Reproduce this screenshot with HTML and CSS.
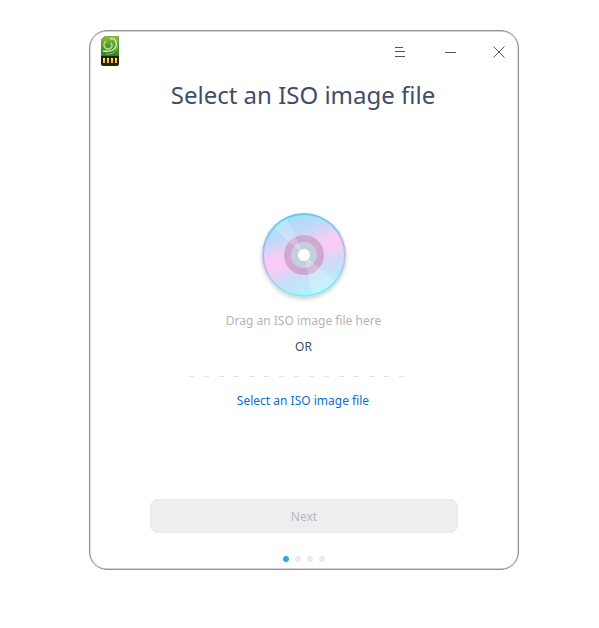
FILE: index.html
```html
<!DOCTYPE html>
<html lang="en">
<head>
<meta charset="utf-8">
<title>Boot Maker</title>
<link rel="stylesheet" href="styles.css">
</head>
<body>
<main class="window">
  <header class="titlebar">
    <svg class="app-icon" width="20" height="32" viewBox="0 0 20 32">
      <defs>
        <linearGradient id="card" x1="0" y1="0" x2="0" y2="1">
          <stop offset="0" stop-color="#8fbf38"/><stop offset=".5" stop-color="#4f9a2c"/><stop offset="1" stop-color="#2f8420"/>
        </linearGradient>
      </defs>
      <path d="M5 1H17.500Q19 1 19 2.500V29Q19 31 17 31H3Q1 31 1 29V5Z" fill="#252410"/>
      <path d="M5 1H17.500Q19 1 19 2.500V21H1V5Z" fill="url(#card)"/>
      <path d="M6 6C2.500 9 4 14 8 14C12 14 13 10 11 8" fill="none" stroke="#b9dc91" stroke-width="1.500"/>
      <path d="M10 4C14 2.500 17.500 6 16 11C14.500 15.500 9 17 3 16" fill="none" stroke="#d3eab8" stroke-width="1.500"/>
      <path d="M17.500 11C17 17 12 19.500 6 19" fill="none" stroke="#8fc467" stroke-width="1"/>
      <path d="M3 23h2v5H3zM7 23h2v5H7zM11 23h2v5h-2zM15 23h2v5h-2z" fill="#f0b92e"/>
      <path d="M3 23h2v2H3zM7 23h2v2H7zM11 23h2v2h-2zM15 23h2v2h-2z" fill="#ffe17b"/>
    </svg>
    <div class="controls">
      <svg width="12" height="12" viewBox="0 0 12 12"><path d="M1 1.500h8M1 5.500h10M1 10.500h10"/></svg>
      <svg width="12" height="12" viewBox="0 0 12 12"><path d="M1 6.500h11"/></svg>
      <svg width="12" height="12" viewBox="0 0 12 12"><path d="M.5 .5l11 11M11.500 .5l-11 11"/></svg>
    </div>
  </header>
  <h1 class="title">Select an ISO image file</h1>
  <section class="drop-area">
    <div class="disc"><div class="disc-face"><div class="disc-ring"><div class="disc-hub"><div class="disc-hole"></div></div></div><div class="disc-shine"></div></div></div>
    <p class="hint">Drag an ISO image file here</p>
    <p class="or">OR</p>
    <div class="dashes"></div>
    <a class="select">Select an ISO image file</a>
  </section>
  <button class="next" disabled>Next</button>
  <div class="steps"><i class="dot active"></i><i class="dot"></i><i class="dot"></i><i class="dot"></i></div>
</main>
</body>
</html>
```
FILE: styles.css
```css
* { box-sizing: border-box; }
body {
  margin: 0;
  padding: 30px 0 0 89px;
  background: #fff;
  font: 12px/18px "Noto Sans", sans-serif;
}
.window {
  width: 430px;
  height: 540px;
  border: 1.5px solid #929292;
  box-shadow: inset 0 0 0 .4px #aaa;
  border-radius: 18px;
  display: flex;
  flex-direction: column;
  align-items: center;
}
.titlebar {
  width: 100%;
  height: 41px;
  padding: 4px 13px 0 10px;
  display: flex;
  justify-content: space-between;
}
.controls {
  display: flex;
  width: 111px;
  margin-top: 11px;
  justify-content: space-between;
}
.controls svg { fill: none; stroke: #50545c; stroke-width: 1; }
.title {
  margin: 6px 0 0;
  width: 100%;
  padding-right: 2px;
  text-align: center;
  font-size: 24px;
  line-height: 34px;
  font-weight: 400;
  color: #414d68;
}
.drop-area {
  margin-top: 101px;
  display: flex;
  flex-direction: column;
  align-items: center;
}
.disc {
  width: 84px;
  height: 84px;
  padding: 2px;
  border-radius: 50%;
  background: linear-gradient(170deg, #52cdee 0%, #6fcdf2 15%, #bcb6e8 45%, #c7bcea 60%, #7deff4 88%);
  box-shadow: 0 2px 4px rgba(0, 0, 0, .2);
}
.disc-face {
  position: relative;
  height: 80px;
  padding: 20px;
  border-radius: 50%;
  background: linear-gradient(160deg, #a2dff9 8%, #bcdaf8 25%, #f6cdf6 43%, #f8cbf5 52%, #cddcf9 68%, #aef5fc 90%);
}
.disc-ring {
  width: 40px;
  height: 40px;
  padding: 7px;
  border-radius: 50%;
  background: linear-gradient(160deg, #c3acd4, #d4a9d1 50%, #c2a9d0);
}
.disc-hub {
  width: 26px;
  height: 26px;
  padding: 7px;
  border-radius: 50%;
  background: #c5d0de;
}
.disc-hole { width: 12px; height: 12px; border-radius: 50%; background: #fff; }
.disc-shine {
  position: absolute;
  inset: 0;
  border-radius: 50%;
  background: conic-gradient(transparent 130deg, rgba(255,255,255,.22) 130deg 168deg, transparent 168deg 312deg, rgba(255,255,255,.22) 312deg 335deg, transparent 335deg);
  mask: radial-gradient(circle, transparent 6px, #000 6.5px);
}
.hint { margin: 15px 1px 0 0; color: #b4b4b4; }
.or { margin: 8px 1px 0 0; color: #414d68; }
.dashes {
  width: 230px;
  height: 1px;
  margin: 20px 2px 15px 0;
  background: repeating-linear-gradient(90deg, transparent 0 1px, #e2e2e2 1px 6px, transparent 6px 15px);
  background-size: 216px 1px;
  background-repeat: no-repeat;
}
.select { margin-right: 2px; color: #0a6fd0; }
.next {
  width: 308px;
  height: 34px;
  margin: 89px 0 0;
  padding: 2px 0 0;
  border: 1px solid #ebebeb;
  border-radius: 8px;
  background: #eee;
  font: inherit;
  color: #b5b9c2;
}
.steps { display: flex; gap: 6px; margin-top: 23px; }
.dot { width: 6px; height: 6px; border-radius: 50%; background: #e9ebf0; }
.dot.active { background: #2ca7f8; }
```
